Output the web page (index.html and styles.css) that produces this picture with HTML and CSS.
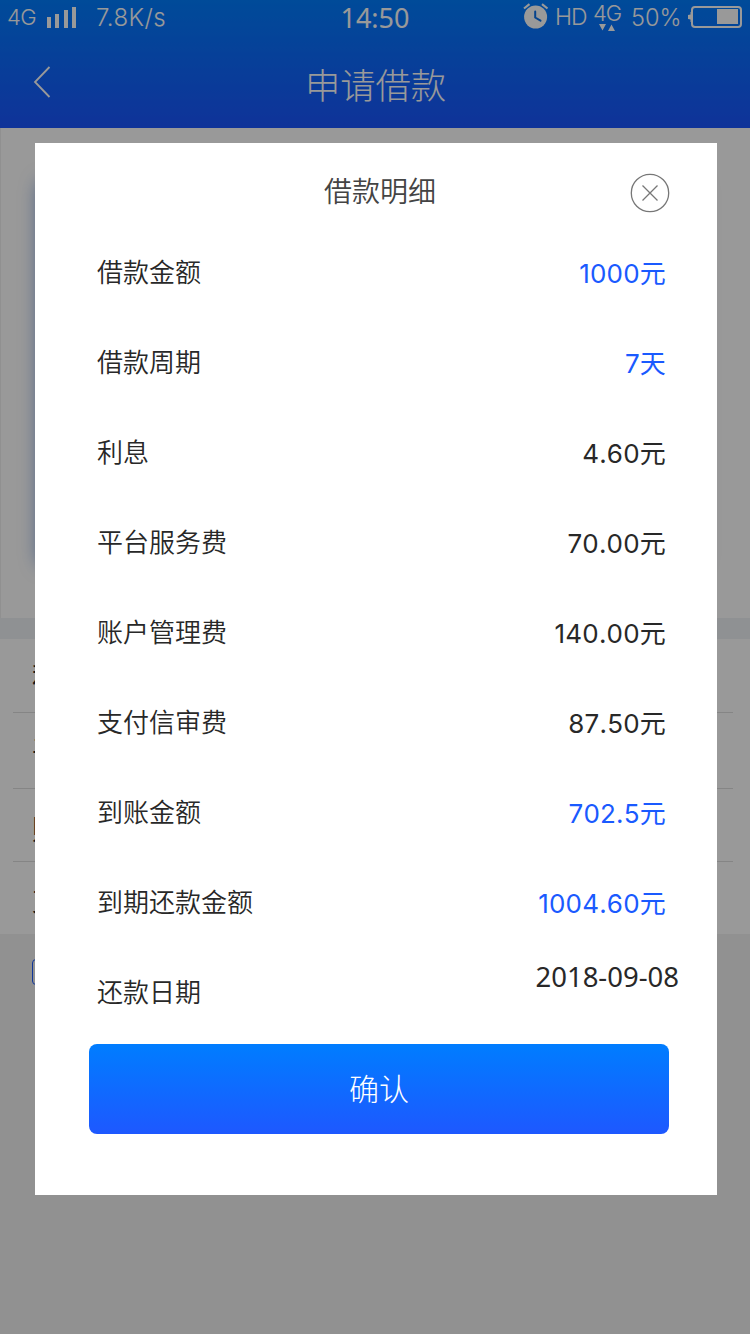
FILE: index.html
```html
<!DOCTYPE html>
<html lang="zh-CN">
  <head>
    <meta charset="UTF-8" />
    <meta name="viewport" content="width=750" />
    <title>申请借款</title>
    <link rel="stylesheet" href="styles.css">
  </head>
  <body>
    <header class="header">
      <div class="status-bar">
        <div class="status-left">
          <span>4G</span>
          <svg class="signal" width="29" height="21" viewBox="0 0 29 21" fill="#fff">
            <path d="M0 10h4v11H0zM8 7h4v14H8zM17 3h4v18h-4zM25 0h4v21h-4z" />
          </svg>
          <span class="speed">7.8K/s</span>
        </div>
        <div class="time">14:50</div>
        <div class="status-right">
          <svg class="alarm" width="26" height="26" viewBox="0 0 26 26" fill="none">
            <circle cx="12.6" cy="14" r="11.5" fill="#fff" />
            <path d="M1 5.5L6.5 1.2M19 1.2L24.5 5.5" stroke="#fff" stroke-width="2.2" />
            <path d="M12.2 8.5v6l5.3 3.2" stroke="#0a70ec" stroke-width="2" stroke-linecap="round" />
          </svg>
          <span class="hd">HD</span>
          <div class="network">
            <span>4G</span>
            <svg width="16" height="7" viewBox="0 0 16 7" fill="#fff">
              <path d="M0 0h7L3.5 6.5zM9 7h7L12.5.5z" />
            </svg>
          </div>
          <span class="percent">50%</span>
          <svg class="battery" width="54" height="22" viewBox="0 0 54 22" fill="none">
            <rect x="4" y="1" width="49" height="20" rx="3" stroke="#fff" stroke-width="2" />
            <path d="M4 6H2.500v2.500L0 9v4l2.500.5V16H4z" fill="#fff" />
            <rect x="29" y="3" width="21" height="15" fill="#fff" />
          </svg>
        </div>
      </div>
      <div class="nav-bar">
        <svg class="back" width="18" height="32" viewBox="0 0 18 32" fill="none">
          <path d="M16.500 1L2 16l14.500 15" stroke="#fff" stroke-width="1.800" />
        </svg>
        <h1>申请借款</h1>
      </div>
    </header>

    <main class="page">
      <section class="card-panel">
        <div class="card"></div>
      </section>
      <ul class="fees">
        <li>利</li>
        <li>平</li>
        <li>账</li>
        <li>支</li>
      </ul>
      <div class="agree"><span class="checkbox"></span></div>
    </main>

    <div class="mask">
      <div class="modal">
        <div class="modal-head">
          <h2>借款明细</h2>
          <svg class="close" width="40" height="40" viewBox="0 0 40 40" fill="none" stroke="#777">
            <circle cx="20" cy="20" r="18.700" stroke-width="1.300" />
            <path d="M12.500 12.500l15 15M27.500 12.500l-15 15" stroke-width="1.300" />
          </svg>
        </div>
        <dl class="detail">
          <div class="row blue"><dt>借款金额</dt><dd>1000元</dd></div>
          <div class="row blue"><dt>借款周期</dt><dd>7天</dd></div>
          <div class="row"><dt>利息</dt><dd>4.60元</dd></div>
          <div class="row"><dt>平台服务费</dt><dd>70.00元</dd></div>
          <div class="row"><dt>账户管理费</dt><dd>140.00元</dd></div>
          <div class="row"><dt>支付信审费</dt><dd>87.50元</dd></div>
          <div class="row blue"><dt>到账金额</dt><dd>702.5元</dd></div>
          <div class="row blue"><dt>到期还款金额</dt><dd>1004.60元</dd></div>
          <div class="row date"><dt>还款日期</dt><dd>2018-09-08</dd></div>
        </dl>
        <button class="confirm">确认</button>
      </div>
    </div>
  </body>
</html>
```
FILE: styles.css
```css
* {
  box-sizing: border-box;
}
html,
body {
  width: 750px;
  height: 1334px;
  margin: 0;
  overflow: hidden;
  background: #f2f2f2;
  font-family: "Noto Sans CJK SC", sans-serif;
  color: #282828;
}
h1,
h2,
ul,
dl,
dd {
  margin: 0;
  padding: 0;
  font-weight: 400;
}
svg {
  display: block;
  flex: none;
}

/* Header */
.header {
  height: 128px;
  background: linear-gradient(#007dff, #1a55ff);
  color: #fff;
}
.status-bar {
  display: grid;
  grid-template-columns: 1fr auto 1fr;
  height: 36px;
  padding: 0 8px 0 7px;
  font: 350 24px/36px "Inter", sans-serif;
}
.status-left,
.status-right {
  display: flex;
  align-items: flex-start;
}
.status-left > span:first-child {
  width: 40px;
  font-size: 22px;
  line-height: 34px;
  letter-spacing: -0.7px;
}
.signal {
  margin-top: 7px;
}
.speed {
  margin-left: 20px;
  letter-spacing: 0.4px;
}
.time {
  padding-left: 1px;
  font: 400 27px/36px "Noto Sans", sans-serif;
}
.status-right {
  justify-content: flex-end;
}
.alarm {
  margin: 3px 6px 0 0;
}
.hd {
  width: 38px;
  font-size: 23px;
  line-height: 34px;
  letter-spacing: -1px;
}
.network {
  display: flex;
  flex-direction: column;
  align-items: center;
  width: 28px;
  margin-right: 10px;
  font-size: 22px;
  line-height: 27px;
  letter-spacing: -1px;
}
.network svg {
  margin-top: -3px;
}
.percent {
  width: 57px;
  font-size: 23.5px;
}
.battery {
  margin-top: 6px;
}
.nav-bar {
  display: grid;
  grid-template-columns: 34px 1fr 34px;
  align-items: center;
  height: 92px;
  padding: 0 32px 0 33px;
}
.nav-bar h1 {
  padding-top: 2px;
  text-align: center;
  font-size: 35.3px;
  font-weight: 300;
  line-height: 89px;
}

/* Page */
.card-panel {
  height: 490px;
  padding: 52px 50px 52px 37px;
  border-left: 1px solid #f0f0f0;
  background: #fff;
}
.card {
  height: 386px;
  border-radius: 10px;
  background: #1a5aff;
  box-shadow: 0 0 18px rgba(26, 90, 200, 0.6);
}
.fees {
  padding: 0 17px 0 13px;
  border-top: 21px solid #eff2f5;
  background: #fff;
  list-style: none;
}
.fees li {
  height: 74px;
  padding-left: 19px;
  border-bottom: 1px solid #dedede;
  font-size: 28px;
  line-height: 73px;
}
.fees li:nth-child(2) {
  height: 76px;
}
.fees li:nth-child(3) {
  height: 73px;
  line-height: 78px;
}
.fees li:last-child {
  height: 72px;
  border-bottom: none;
  line-height: 75px;
}
.agree {
  padding: 25px 32px;
}
.checkbox {
  display: block;
  width: 26px;
  height: 26px;
  border: 1px solid #1a5aff;
  border-radius: 4px;
}

/* Modal */
.mask {
  position: fixed;
  inset: 0;
  padding: 143px 33px 139px 35px;
  background: rgba(0, 0, 0, 0.4);
}
.modal {
  height: 1052px;
  padding: 0 48px 0 54px;
  background: #fff;
}
.modal-head {
  display: grid;
  grid-template-columns: 40px 1fr 40px;
  align-items: center;
  height: 99px;
}
.modal-head h2 {
  grid-column: 2;
  padding: 0 0 5px 2px;
  text-align: center;
  font-size: 28px;
  font-weight: 350;
  line-height: 40px;
  color: #444;
}
.close {
  margin-left: 1px;
}
.detail {
  height: 802px;
  padding: 0 3px 0 8px;
  margin-top: -16px;
}
.row {
  display: flex;
  justify-content: space-between;
  height: 90px;
  font-size: 26px;
  font-weight: 350;
  line-height: 90px;
}
.row dd {
  padding-top: 3px;
  font: 380 26px/90px "Inter", "Noto Sans CJK SC", sans-serif;
  font-kerning: none;
  letter-spacing: 0.2px;
}
.row.blue dd {
  color: #1a5aff;
}
.row.date dd {
  margin-right: -13px;
  padding-top: 0;
  font: 400 27.5px/62px "Noto Sans", sans-serif;
  letter-spacing: 0;
}
.confirm {
  display: block;
  width: 580px;
  height: 90px;
  margin-top: 16px;
  padding: 0 0 4px;
  border: none;
  border-radius: 8px;
  background: linear-gradient(#007dff, #1e58ff);
  color: #fff;
  font: 300 30px/86px "Noto Sans CJK SC", sans-serif;
}
```
